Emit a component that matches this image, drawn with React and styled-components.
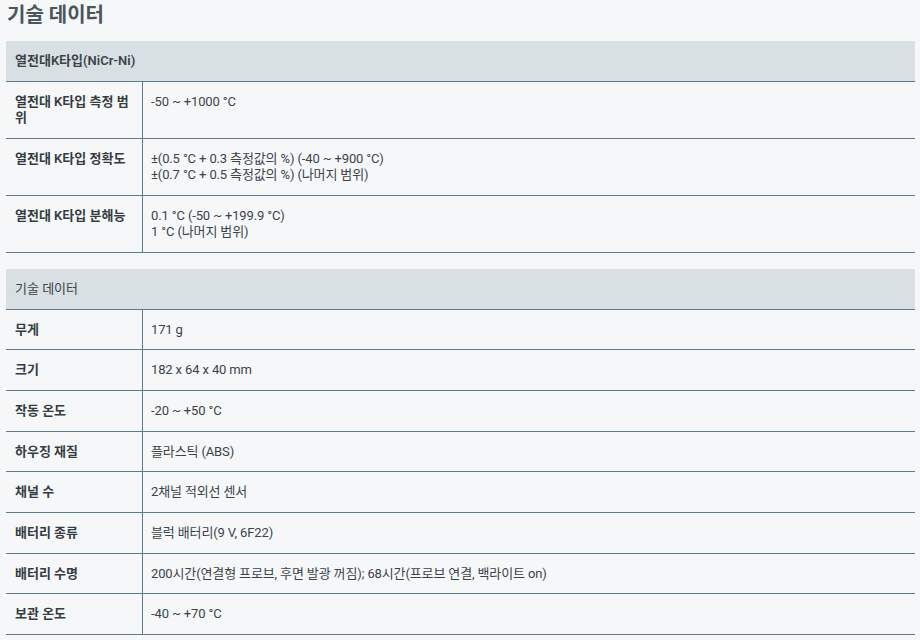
import React from "react";
import styled, { createGlobalStyle } from "styled-components";

const Global = createGlobalStyle`
  html, body { margin: 0; padding: 0; background: #f5f7f9; }
  body {
    font-family: Roboto, "Noto Sans CJK KR", sans-serif;
    color: #3b4349;
  }
`;

const Page = styled.div`
  padding: 0 5px 0 6px;
  width: 909px;
`;

const Title = styled.h2`
  margin: 0;
  padding: 2px 0 0 1px;
  height: 41px;
  box-sizing: border-box;
  font-size: 20px;
  line-height: 26px;
  font-weight: 700;
  color: #4b555b;
  font-family: Roboto, "Noto Sans CJK KR", sans-serif;
`;

const Section = styled.div`
  margin-bottom: ${(p) => (p.$last ? 0 : 16.3)}px;
`;

const Header = styled.div`
  background: #d8e0e3;
  border-bottom: 1px solid #5e7b89;
  padding: 12px 9px 11.4px;
  font-size: 13px;
  line-height: 16.3px;
  font-weight: ${(p) => (p.$bold ? 600 : 400)};
  color: #3b4349;
`;

const Row = styled.div`
  display: grid;
  grid-template-columns: 137px 1fr;
  border-bottom: 1px solid #5e7b89;
`;

const Label = styled.div`
  padding: 12px 9px 11.4px;
  border-right: 1px solid #5e7b89;
  font-size: 13px;
  line-height: 16.3px;
  font-weight: 600;
  color: #353c41;
`;

const Value = styled.div`
  padding: 12px 8px 11.4px;
  font-size: 13px;
  line-height: 16.3px;
  color: #3b4349;
  letter-spacing: -0.01em;
`;

const sections = [
  {
    title: "열전대K타입(NiCr-Ni)",
    bold: true,
    rows: [
      ["열전대 K타입 측정 범위", ["-50 ~ +1000 °C"]],
      [
        "열전대 K타입 정확도",
        ["±(0.5 °C + 0.3 측정값의 %) (-40 ~ +900 °C)", "±(0.7 °C + 0.5 측정값의 %) (나머지 범위)"],
      ],
      ["열전대 K타입 분해능", ["0.1 °C (-50 ~ +199.9 °C)", "1 °C (나머지 범위)"]],
    ],
  },
  {
    title: "기술 데이터",
    bold: false,
    rows: [
      ["무게", ["171 g"]],
      ["크기", ["182 x 64 x 40 mm"]],
      ["작동 온도", ["-20 ~ +50 °C"]],
      ["하우징 재질", ["플라스틱 (ABS)"]],
      ["채널 수", ["2채널 적외선 센서"]],
      ["배터리 종류", ["블럭 배터리(9 V, 6F22)"]],
      ["배터리 수명", ["200시간(연결형 프로브, 후면 발광 꺼짐); 68시간(프로브 연결, 백라이트 on)"]],
      ["보관 온도", ["-40 ~ +70 °C"]],
    ],
  },
];

export default function App() {
  return (
    <>
      <Global />
      <Page>
        <Title>기술 데이터</Title>
        {sections.map((s, i) => (
          <Section key={s.title} $last={i === sections.length - 1}>
            <Header $bold={s.bold}>{s.title}</Header>
            {s.rows.map(([label, lines]) => (
              <Row key={label}>
                <Label>{label}</Label>
                <Value>
                  {lines.map((l) => (
                    <div key={l}>{l}</div>
                  ))}
                </Value>
              </Row>
            ))}
          </Section>
        ))}
      </Page>
    </>
  );
}
